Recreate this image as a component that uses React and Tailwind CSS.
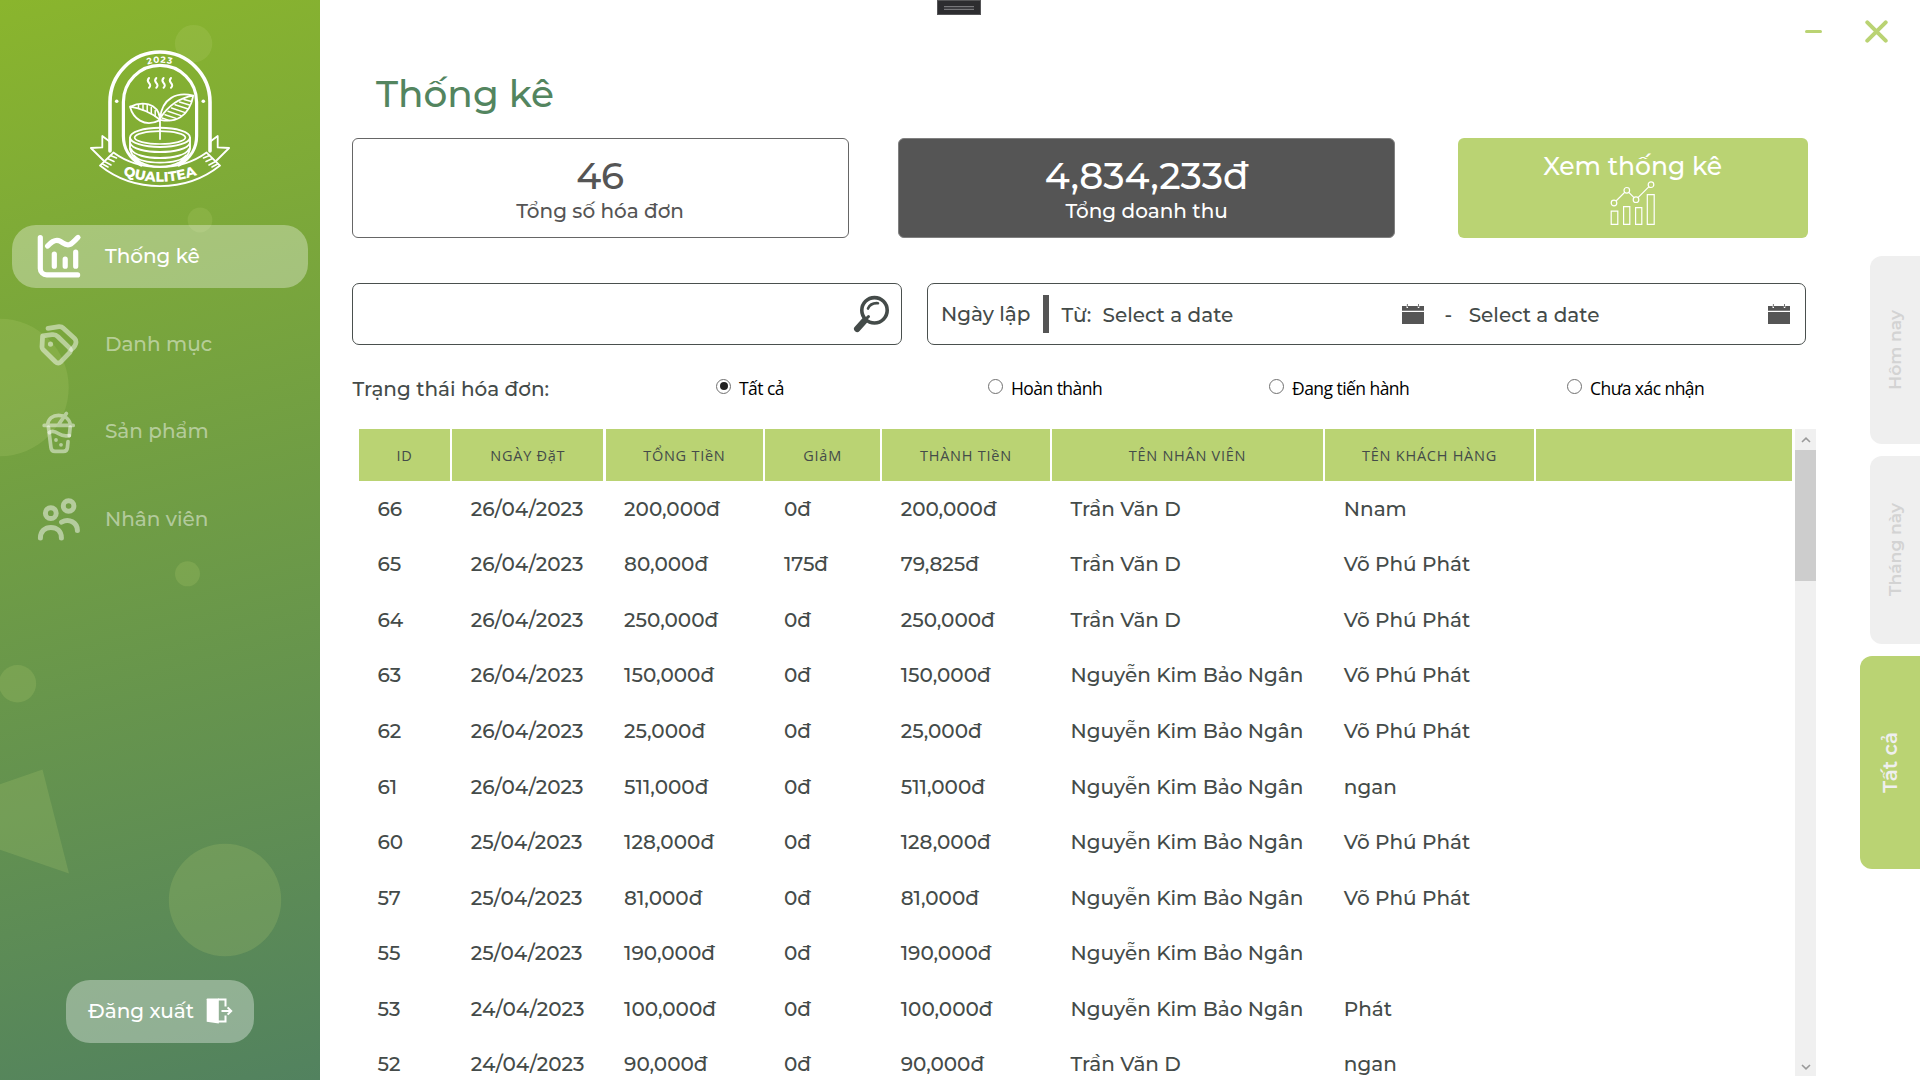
import React from "react";

const navItems = [
  { label: "Thống kê", icon: StatsIcon, active: true },
  { label: "Danh mục", icon: TagsIcon },
  { label: "Sản phẩm", icon: CupIcon },
  { label: "Nhân viên", icon: StaffIcon },
];

const columns = ["ID", "NGÀY ĐặT", "TỔNG TIềN", "GIảM", "THÀNH TIềN", "TÊN NHÂN VIÊN", "TÊN KHÁCH HÀNG", ""];

const rows = [
  ["66", "26/04/2023", "200,000đ", "0đ", "200,000đ", "Trần Văn D", "Nnam"],
  ["65", "26/04/2023", "80,000đ", "175đ", "79,825đ", "Trần Văn D", "Võ Phú Phát"],
  ["64", "26/04/2023", "250,000đ", "0đ", "250,000đ", "Trần Văn D", "Võ Phú Phát"],
  ["63", "26/04/2023", "150,000đ", "0đ", "150,000đ", "Nguyễn Kim Bảo Ngân", "Võ Phú Phát"],
  ["62", "26/04/2023", "25,000đ", "0đ", "25,000đ", "Nguyễn Kim Bảo Ngân", "Võ Phú Phát"],
  ["61", "26/04/2023", "511,000đ", "0đ", "511,000đ", "Nguyễn Kim Bảo Ngân", "ngan"],
  ["60", "25/04/2023", "128,000đ", "0đ", "128,000đ", "Nguyễn Kim Bảo Ngân", "Võ Phú Phát"],
  ["57", "25/04/2023", "81,000đ", "0đ", "81,000đ", "Nguyễn Kim Bảo Ngân", "Võ Phú Phát"],
  ["55", "25/04/2023", "190,000đ", "0đ", "190,000đ", "Nguyễn Kim Bảo Ngân", ""],
  ["53", "24/04/2023", "100,000đ", "0đ", "100,000đ", "Nguyễn Kim Bảo Ngân", "Phát"],
  ["52", "24/04/2023", "90,000đ", "0đ", "90,000đ", "Trần Văn D", "ngan"],
];

function StatsIcon() {
  return (
    <svg className="overflow-visible" width="44" height="44" viewBox="0 0 44 44" fill="none" stroke="currentColor" strokeWidth="5.2" strokeLinecap="round" strokeLinejoin="round">
      <path d="M3.3 3.6V34.5a6.4 6.4 0 0 0 6.4 6.4H40.6" />
      <path d="M10.6 12C15 7.2 18.2 5.8 21.5 6.6C26 7.8 28 12.6 33 10.4C35.6 9.2 38 6.2 41 3.4" />
      <path d="M17.3 20V32.2M28.2 25.2V32.2M38.7 18.2V32.2" />
    </svg>
  );
}

function TagsIcon() {
  return (
    <svg className="overflow-visible" width="44" height="44" viewBox="0 0 44 44" fill="none" stroke="currentColor" strokeWidth="4.8" strokeLinecap="round" strokeLinejoin="round">
      <path d="M5.6 13.9L15 12.7Q18.6 12.3 21 14.7L32.4 25.9Q34.4 28.500 32.4 30.900L24 39.700Q21.2 42.300 18.4 39.700L6 27.500Q5 26.500 5 24.900Z" />
      <path d="M11 6.3L22 4.7Q24.6 4.5 26.4 6.3L37.6 16.5Q39 17.900 39 19.900Q39 23.500 34.4 27.500" />
      <circle cx="13.5" cy="22.1" r="2.6" fill="currentColor" stroke="none" />
    </svg>
  );
}

function CupIcon() {
  return (
    <svg className="overflow-visible" width="44" height="44" viewBox="0 0 44 44" fill="none" stroke="currentColor" strokeWidth="3.7" strokeLinecap="round" strokeLinejoin="round">
      <path d="M7.2 16.4H36.2M10.6 16C11.2 9.6 16 6.4 21.6 6.4C27.6 6.4 32.6 9.8 33.4 16M29.4 4.4L22 15" />
      <path d="M11.4 18L14 38.8Q14.4 42.4 18 42.4H26.4Q30 42.4 30.4 38.8L31 32.6M33.2 18L32.3 26.6" />
      <path d="M12.4 23.6C14.6 21.4 18.6 22.6 21.8 24.8C25 27 28.4 27.4 32.3 26.6" />
      <circle cx="19" cy="31" r="1.9" fill="currentColor" stroke="none" />
      <circle cx="24" cy="35.8" r="1.9" fill="currentColor" stroke="none" />
    </svg>
  );
}

function StaffIcon() {
  return (
    <svg className="-mt-[2px] overflow-visible" width="44" height="44" viewBox="0 0 44 44" fill="none" stroke="currentColor" strokeWidth="5" strokeLinecap="round">
      <circle cx="13.8" cy="17.2" r="5.4" />
      <circle cx="31.6" cy="10" r="5.3" />
      <path d="M3.4 42C3.4 35.2 8 31.4 13.9 31.4S24.4 35.2 24.4 42M24.6 26.2C32 22 40.4 26.6 40.4 34.6" />
    </svg>
  );
}

function Logo() {
  return (
    <svg width="140" height="142" viewBox="0 0 140 142" fill="none" stroke="white" strokeLinecap="round" strokeLinejoin="round">
      <defs>
        <path id="year-arc" d="M30 54A40 39.3 0 0 1 110 54" />
        <path id="name-arc" d="M20 121.5Q70 146 120 121.5" />
      </defs>
      <path d="M20 103V54A50 50 0 0 1 120 54V103" strokeWidth="3.6" />
      <path d="M51 117C38 109 33.4 100 33.4 88V54A36.6 36.6 0 0 1 106.6 54V88C106.6 100 102 109 89 117" strokeWidth="3.2" />
      <circle cx="26.7" cy="53.3" r="1.8" fill="white" stroke="none" />
      <circle cx="113.3" cy="53.3" r="1.8" fill="white" stroke="none" />
      <path strokeWidth="2" d="M59 30q-2.4 2.4 0 5t0 4.8M66.3 30q-2.4 2.4 0 5t0 4.8M73.6 30q-2.4 2.4 0 5t0 4.8M81 30q-2.4 2.4 0 5t0 4.8" />
      <path strokeWidth="1.8" d="M70 91V70C67.5 54.5 52 53 40 58.7C43 70 54 80 69.4 72.4M40 58.7C52 60.5 62 65.5 69.6 71.5M70 70.5C72 50 87 43.6 103.3 47.7C99 70 84 75 70.4 71.8M103.3 47.7C89 50 78 58 70 70.5" />
      <path strokeWidth="1.5" d="M48.5 57V60.4M53 56.6V62M57.2 57.6V63.6M61.3 59.6V65.6M65.2 62.6V68.2" />
      <path strokeWidth="1.5" d="M94 51.5L101.5 53.5M89.5 54L99.5 57M85 56.8L97.5 60.8M81.5 60L94.5 64.4M78 63.2L91 67.6M75 66.8L86 70.4M72 70L79 72.4" />
      <ellipse cx="70" cy="89.4" rx="30" ry="9.6" strokeWidth="1.9" />
      <ellipse cx="70" cy="89.6" rx="25.4" ry="6.4" strokeWidth="1.7" />
      <path strokeWidth="1.9" d="M40 90V101C43 113 55 118.6 70 118.6S97 113 100 101V90M40 95C44 107 96 107 100 95M41 101C46 113 94 113 99 101M44 107.5C52 117 88 117 96 107.5" />
      <path strokeWidth="1.9" d="M23.4 104.6C50 124 90 124 116.6 104.6L130 117.6C96 145 44 145 10 117.6Z" />
      <path strokeWidth="1.8" d="M20 93.7L12.3 88V99.4L0.9 100L14 113M120 93.7L127.7 88V99.4L139.1 100L126 113" />
      <path strokeWidth="1.6" d="M20.5 107.5L26.5 110M17.5 110.5L24 113.5M14.5 113.5L21 117M12.5 116L18 119M119.5 107.5L113.5 110M122.5 110.5L116 113.5M125.5 113.5L119 117M127.5 116L122 119" />
      <text fill="white" stroke="none" fontSize="8.8" fontWeight="700" letterSpacing="0.9" textAnchor="middle">
        <textPath href="#year-arc" startOffset="50%">2023</textPath>
      </text>
      <text fill="white" stroke="none" fontSize="13.8" fontWeight="800" letterSpacing="0.1" textAnchor="middle">
        <textPath href="#name-arc" startOffset="50%">QUALITEA</textPath>
      </text>
    </svg>
  );
}

function Sidebar() {
  return (
    <aside className="relative flex h-full w-[320px] shrink-0 flex-col bg-[linear-gradient(165deg,#8ab52d_0%,#52825f_100%)]">
      <svg className="absolute inset-0" width="320" height="1080" fill="#bad373" fillOpacity="0.2">
        <circle cx="193.6" cy="43.6" r="18.7" />
        <circle cx="200" cy="220" r="12.4" />
        <circle cx="0" cy="387.5" r="68.7" />
        <circle cx="187.5" cy="573.8" r="12.5" />
        <circle cx="17.5" cy="683.7" r="18.7" />
        <path d="M0 784.3L42.5 769.5L69 873.5L0 849.8Z" />
        <circle cx="225" cy="900" r="56.2" />
      </svg>
      <div className="relative flex h-[225px] justify-center pt-12">
        <Logo />
      </div>
      <nav className="relative flex flex-col gap-[25px] pr-[12.5px] pl-[12.4px]">
        {navItems.map(({ label, icon: Icon, active }) => (
          <a
            key={label}
            className={
              active
                ? "flex h-[62.5px] items-center gap-[24px] rounded-[24px] bg-white/33 pl-[24.5px] text-xl font-medium text-white"
                : "flex h-[62.5px] items-center gap-[24px] rounded-[24px] pl-[24.5px] text-xl font-medium text-white/48"
            }
          >
            <Icon />
            <span>{label}</span>
          </a>
        ))}
      </nav>
      <button className="relative mx-auto mt-auto mb-[37.5px] flex h-[62.5px] w-[188px] items-center gap-3 rounded-[24px] bg-white/35 pl-[22px] text-xl font-medium text-white">
        <span>Đăng xuất</span>
        <svg width="27" height="27" viewBox="0 0 27 27" fill="none" stroke="white" strokeWidth="2">
          <path d="M0.7 1.2Q0.7 0.6 1.4 0.6H12.8V25.6L0.7 23.7Z" fill="white" stroke="none" />
          <path d="M12 1.6H19.5V8.5M19.5 17.5V23.4H12" />
          <path d="M15.5 13H24.5M21.6 9.4L25.2 13L21.6 16.6" />
        </svg>
      </button>
    </aside>
  );
}

function CalendarIcon() {
  return (
    <svg className="shrink-0" width="22" height="20" viewBox="0 0 22 20" fill="#555555">
      <path d="M0 2H4.5V4H6V2H15.8V4H17.3V2H22V6.8H0ZM0 8H22V20H0ZM4.9 0H5.7V3H4.9ZM16.2 0H17V3H16.2Z" />
    </svg>
  );
}

function Radio({ label, checked }) {
  return (
    <label className="flex items-center font-['Open_Sans','Noto_Sans',sans-serif] text-[17.5px] leading-6 tracking-[-0.55px] text-black">
      <span className="-mt-[4px] mr-2 flex size-[15px] items-center justify-center rounded-full border border-[#707070] bg-white">
        {checked && <span className="size-[8px] rounded-full bg-[#212121]" />}
      </span>
      {label}
    </label>
  );
}

function SideTab({ label, active }) {
  return (
    <div
      className={
        active
          ? "flex h-[212.5px] w-[60px] items-center justify-center rounded-l-[12px] bg-[#bad373] text-[19.8px] font-semibold text-[#efefef]"
          : "flex h-[187.5px] w-[50px] items-center justify-center rounded-l-[12px] bg-[#efefef] text-[17.2px] font-semibold text-[#d3d3d3]"
      }
    >
      <span className="rotate-180 leading-6 [writing-mode:vertical-rl]">{label}</span>
    </div>
  );
}

function Filters() {
  return (
    <div className="flex h-[62.5px] gap-[25px]">
      <div className="flex w-[550px] items-center justify-end rounded-[7px] border-[1.5px] border-[#4a504e] pr-[9.5px]">
        <svg className="-mt-px" width="40" height="40" viewBox="0 0 40 40" fill="none" stroke="#444b49" strokeLinecap="round">
          <circle cx="22.5" cy="17.3" r="12.7" strokeWidth="3.6" />
          <path d="M5.2 35.8L12.6 27.6" strokeWidth="6.4" />
          <path d="M14 26L16.5 23.5" strokeWidth="3" />
          <path d="M16 15.6Q18.5 9.6 26 10.2" strokeWidth="2.6" />
        </svg>
      </div>
      <div className="flex w-[879px] items-center rounded-[7px] border-[1.5px] border-[#4a504e] pl-[13px] text-xl font-medium text-[#444b49]">
        <span className="w-[102px]">Ngày lập</span>
        <span className="h-[37.5px] w-[6px] bg-[#555555]" />
        <span className="ml-[12.5px] w-[41px] pt-0.5">Từ:</span>
        <span className="w-[299.5px] pt-0.5">Select a date</span>
        <CalendarIcon />
        <span className="ml-[20.5px] pt-0.5">-</span>
        <span className="ml-[16.5px] w-[299px] pt-0.5">Select a date</span>
        <CalendarIcon />
      </div>
    </div>
  );
}

function InvoiceTable() {
  return (
    <div className="flex h-[651px] overflow-hidden">
      <div className="ml-[7px] w-[1433px]">
        <div className="grid h-[52px] grid-cols-[91px_151px_157.5px_114.5px_167.5px_271px_208.5px_256px] gap-x-[2.3px]">
          {columns.map((name, i) => (
            <div
              key={i}
              className="flex items-center justify-center bg-[#bad373] pt-px font-['Open_Sans','Noto_Sans',sans-serif] text-[14.5px] tracking-[0.75px] text-[#444b49]"
            >
              {name}
            </div>
          ))}
        </div>
        {rows.map((row) => (
          <div
            key={row[0]}
            className="grid h-[55.56px] grid-cols-[91px_151px_157.5px_114.5px_167.5px_271px_208.5px_256px] items-center gap-x-[2.3px] text-xl font-medium text-[#444b49]"
          >
            {row.map((cell, i) => (
              <span key={i} className="pl-[18.5px] whitespace-nowrap">
                {cell}
              </span>
            ))}
          </div>
        ))}
      </div>
      <div className="ml-[3px] flex h-[647px] w-[21px] flex-col items-center bg-[#f0f0f0]">
        <div className="flex h-[21px] items-center justify-center">
          <svg width="10" height="6" viewBox="0 0 10 6" fill="none" stroke="#9a9a9a" strokeWidth="1.6">
            <path d="M1 5L5 1.2L9 5" />
          </svg>
        </div>
        <div className="h-[131px] w-full bg-[#cdcdcd]" />
        <div className="mt-auto flex h-[19px] items-center justify-center">
          <svg width="10" height="6" viewBox="0 0 10 6" fill="none" stroke="#9a9a9a" strokeWidth="1.6">
            <path d="M1 1L5 4.8L9 1" />
          </svg>
        </div>
      </div>
    </div>
  );
}

export default function App() {
  return (
    <div className="relative flex h-[1080px] w-[1920px] overflow-hidden bg-white font-['Montserrat','Inter',sans-serif]">
      <Sidebar />
      <div className="absolute top-0 left-[937px] flex h-[15px] w-[44px] items-center justify-center border border-[#555557] bg-[#2d2d30]">
        <div className="h-[4px] w-[30px] border-y border-[#77777a] bg-[#3e3e42]" />
      </div>
      <div className="flex min-w-0 flex-1 flex-col">
        <div className="flex h-[62px] shrink-0 items-center justify-end pr-[32px]">
          <span className="mr-[43px] h-[3px] w-[17px] rounded-sm bg-[#bad373]" />
          <svg width="23" height="23" viewBox="0 0 23 23" fill="none" stroke="#bad373" strokeWidth="4" strokeLinecap="round">
            <path d="M2.3 2.3L20.7 20.7M20.7 2.3L2.3 20.7" />
          </svg>
        </div>
        <div className="flex">
          <div className="w-[1496px] pl-[32px]">
            <h1 className="flex h-[64px] items-center pl-[24px] text-[37.5px] font-medium text-[#53855f]">Thống kê</h1>
            <div className="mt-[11.5px] -ml-[0.4px] flex h-[100px]">
              <div className="flex w-[497px] flex-col items-center rounded-[6px] border-[1.5px] border-[#666666] pt-[17px] text-[#555555]">
                <span className="text-[37.3px] leading-[40px] font-medium">46</span>
                <span className="mt-px text-xl leading-7 font-medium">Tổng số hóa đơn</span>
              </div>
              <div className="ml-[49.5px] flex w-[497px] flex-col items-center rounded-[6px] border-[1.5px] border-[#808080] bg-[#555555] pt-[17px] text-white">
                <span className="text-[37.3px] leading-[40px] font-medium">4,834,233đ</span>
                <span className="mt-px text-xl leading-7 font-medium">Tổng doanh thu</span>
              </div>
              <button className="ml-[62.5px] flex w-[350px] flex-col items-center rounded-[6px] bg-[#bad373] pt-[12px] text-[25px] font-medium text-white">
                <span className="leading-[32px]">Xem thống kê</span>
                <svg className="-mt-px" width="46" height="46" viewBox="0 0 46 46" fill="none" stroke="white" strokeWidth="1.2">
                  <path d="M1.2 30.2H7.8V43.4H1.2ZM13.6 25.6H19.8V43.4H13.6ZM25.6 26.6H31.8V43.4H25.6ZM37.3 13.6H44.2V43.4H37.3Z" />
                  <circle cx="4" cy="22" r="2.8" />
                  <circle cx="16.8" cy="9.3" r="2.8" />
                  <circle cx="26" cy="18.7" r="2.8" />
                  <circle cx="41" cy="3.7" r="2.8" />
                  <path d="M6 20L14.8 11.3M18.8 11.3L24 16.7M28 16.7L39 5.7" />
                </svg>
              </button>
            </div>
            <div className="mt-[45px]">
              <Filters />
            </div>
            <div className="flex h-[84px] items-center pt-[3px] text-xl font-medium text-[#444b49]">
              <span className="w-[364px] pl-[0.6px]">Trạng thái hóa đơn:</span>
              <div className="-mt-px flex">
                <div className="w-[272px]">
                  <Radio label="Tất cả" checked />
                </div>
                <div className="w-[281px]">
                  <Radio label="Hoàn thành" />
                </div>
                <div className="w-[298px]">
                  <Radio label="Đang tiến hành" />
                </div>
                <Radio label="Chưa xác nhận" />
              </div>
            </div>
            <InvoiceTable />
          </div>
          <div className="flex flex-1 flex-col items-end gap-[12.5px] pt-[194px]">
            <SideTab label="Hôm nay" />
            <SideTab label="Tháng này" />
            <SideTab label="Tất cả" active />
          </div>
        </div>
      </div>
    </div>
  );
}
